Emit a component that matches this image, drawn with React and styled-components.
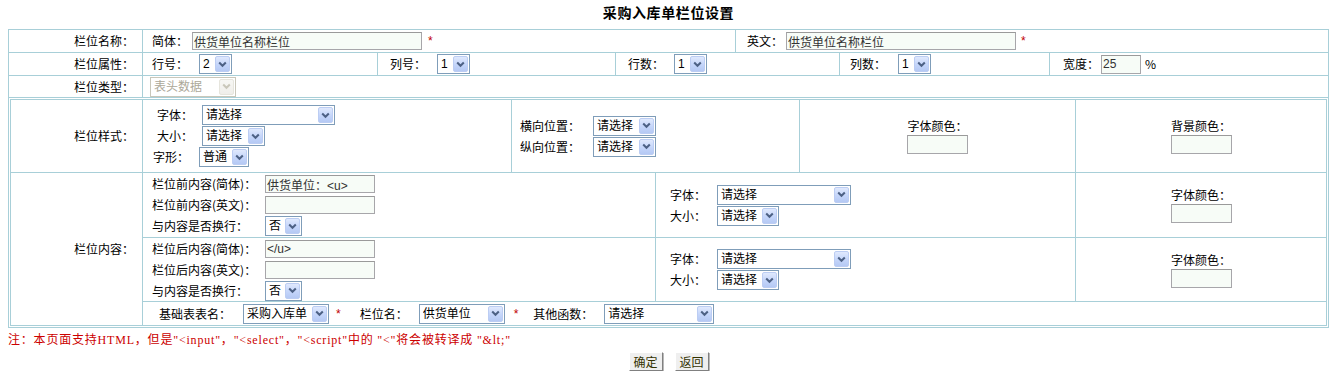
import React from "react";
import styled, { createGlobalStyle } from "styled-components";

const LINE = "#a8cfd8";

const GlobalStyle = createGlobalStyle`
  * { box-sizing: border-box; }
  body {
    margin: 0 8px;
    background: #fff;
    color: #000;
    font-family: "Noto Sans CJK SC", "Liberation Sans", sans-serif;
    font-size: 12px;
    line-height: 16px;
  }
`;

const Title = styled.h1`
  margin: 0;
  height: 29px;
  padding-top: 2px;
  text-align: center;
  font-size: 14px;
  line-height: 20px;
  font-weight: bold;
  letter-spacing: 0.6px;
`;

const Frame = styled.div`
  border: 1px solid ${LINE};
`;

const Row = styled.div`
  display: flex;
  box-sizing: content-box;
  height: ${(p) => p.$h}px;
  & + & {
    border-top: 1px solid ${LINE};
  }
`;

const Label = styled.div`
  flex: none;
  width: ${(p) => p.$w || 133}px;
  display: flex;
  align-items: center;
  justify-content: flex-end;
  padding-right: 8px;
  white-space: nowrap;
`;

const Cell = styled.div`
  display: flex;
  align-items: center;
  flex: ${(p) => (p.$w ? "none" : "1")};
  width: ${(p) => (p.$w ? `${p.$w}px` : "auto")};
  padding-left: ${(p) => p.$pl || 0}px;
  border-left: ${(p) => (p.$noLine ? "none" : `1px solid ${LINE}`)};
  white-space: nowrap;
`;

const Nest = styled.div`
  border-top: 1px solid ${LINE};
  padding: 1px;
`;

const InnerFrame = styled.div`
  border: 1px solid ${LINE};
`;

const Content = styled.div`
  flex: 1;
  display: flex;
  flex-direction: column;
  border-left: 1px solid ${LINE};
`;

const Stack = styled.div`
  display: flex;
  flex-direction: column;
  gap: ${(p) => p.$gap || 0}px;
`;

const Line = styled.div`
  display: flex;
  align-items: center;
  height: ${(p) => p.$h || 20}px;
  padding-left: ${(p) => p.$pl || 0}px;
`;

const ColorStack = styled.div`
  flex: 1;
  display: flex;
  flex-direction: column;
  align-items: center;
  gap: 1px;
`;

const Tag = styled.span`
  flex: none;
  width: ${(p) => (p.$w ? `${p.$w}px` : "auto")};
  margin-left: ${(p) => p.$ml || 0}px;
  white-space: nowrap;
`;

const Star = styled.span`
  flex: none;
  margin-left: ${(p) => p.$ml || 0}px;
  color: #c00000;
  font-family: "Liberation Sans", sans-serif;
  font-size: 12px;
`;

const TextInput = styled.input`
  flex: none;
  width: ${(p) => p.$w}px;
  height: ${(p) => p.$h || 18}px;
  margin: 0 0 0 ${(p) => p.$ml || 0}px;
  padding: 0 1px;
  border: 1px solid #a7a6aa;
  border-top-color: #9a9a9a;
  background: #f7fcf7;
  font-family: "Liberation Sans", "Noto Sans CJK SC", sans-serif;
  font-size: 12px;
  color: #333;
  outline: none;
`;

const SelectWrap = styled.span`
  position: relative;
  flex: none;
  display: inline-block;
  width: ${(p) => p.$w}px;
  height: 20px;
  margin-left: ${(p) => p.$ml || 0}px;
`;

const NativeSelect = styled.select`
  appearance: none;
  width: 100%;
  height: 100%;
  margin: 0;
  padding: 0 18px 0 3px;
  border: 1px solid ${(p) => (p.disabled ? "#c9c7ba" : "#7f9db9")};
  border-radius: 0;
  background: #fff;
  font-family: "Liberation Sans", "Noto Sans CJK SC", sans-serif;
  font-size: 12px;
  color: ${(p) => (p.disabled ? "#aca899" : "#000")};
  opacity: 1;
  outline: none;
`;

const ArrowBox = styled.span`
  position: absolute;
  top: 2px;
  right: 2px;
  width: 15px;
  height: 16px;
  display: flex;
  align-items: center;
  justify-content: center;
  border-radius: 2px;
  pointer-events: none;
  border: 1px solid ${(p) => (p.$disabled ? "#e6e5dd" : "#bccdf3")};
  background: ${(p) =>
    p.$disabled
      ? "linear-gradient(#f7f7f4, #efeeea)"
      : "linear-gradient(#e0e9fd, #c4d5fa 55%, #b5c9f4)"};
`;

const Select = ({ w, value, disabled, ml }) => (
  <SelectWrap $w={w} $ml={ml}>
    <NativeSelect disabled={disabled} defaultValue={value}>
      <option>{value}</option>
    </NativeSelect>
    <ArrowBox $disabled={disabled}>
      <svg width="9" height="7" viewBox="0 0 9 7">
        <path
          d="M1.2 1.5 L4.5 4.8 L7.8 1.5"
          fill="none"
          stroke={disabled ? "#c9c7ba" : "#4d6185"}
          strokeWidth="2"
        />
      </svg>
    </ArrowBox>
  </SelectWrap>
);

const ColorField = ({ title }) => (
  <ColorStack>
    <span>{title}</span>
    <TextInput $w={61} $h={19} />
  </ColorStack>
);

const Note = styled.div`
  margin-top: 4px;
  color: #cc0000;
  font-family: "Liberation Serif", "Noto Sans CJK SC", serif;
  font-size: 12px;
  line-height: 16px;
  letter-spacing: 0.8px;
  white-space: nowrap;
`;

const Buttons = styled.div`
  display: flex;
  justify-content: center;
  gap: 12px;
  margin-top: 4px;
`;

const Button = styled.button`
  width: 34px;
  height: 19px;
  padding: 0;
  border: 1px solid;
  border-color: #fff #808080 #808080 #fff;
  box-shadow: 1px 1px 0 #b8b8b8;
  background: #efefef;
  color: #333300;
  font-family: "Noto Sans CJK SC", sans-serif;
  font-size: 12px;
  line-height: 16px;
`;

const ContentBlock = ({ before }) => (
  <>
    <Cell $w={512} $noLine>
      <Stack>
        <Line $h={21} $pl={9}>
          <Tag $w={113}>栏位{before}内容(简体)：</Tag>
          <TextInput $w={110} defaultValue={before === "前" ? "供货单位：<u>" : "</u>"} />
        </Line>
        <Line $h={21} $pl={9}>
          <Tag $w={113}>栏位{before}内容(英文)：</Tag>
          <TextInput $w={110} />
        </Line>
        <Line $h={21} $pl={9}>
          <Tag $w={113}>与内容是否换行：</Tag>
          <Select w={37} value="否" />
        </Line>
      </Stack>
    </Cell>
    <Cell $w={420} $pl={14}>
      <Stack $gap={1}>
        <Line>
          <Tag $w={47}>字体：</Tag>
          <Select w={134} value="请选择" />
        </Line>
        <Line>
          <Tag $w={47}>大小：</Tag>
          <Select w={62} value="请选择" />
        </Line>
      </Stack>
    </Cell>
    <Cell>
      <ColorField title="字体颜色：" />
    </Cell>
  </>
);

export default function App() {
  return (
    <>
      <GlobalStyle />
      <Title>采购入库单栏位设置</Title>
      <Frame>
        <Row $h={22}>
          <Label>栏位名称：</Label>
          <Cell $w={593} $pl={9}>
            <Tag>简体：</Tag>
            <TextInput $w={230} $ml={4} defaultValue="供货单位名称栏位" />
            <Star $ml={6}>*</Star>
          </Cell>
          <Cell $pl={11}>
            <Tag>英文：</Tag>
            <TextInput $w={230} $ml={3} defaultValue="供货单位名称栏位" />
            <Star $ml={5}>*</Star>
          </Cell>
        </Row>
        <Row $h={22}>
          <Label>栏位属性：</Label>
          <Cell $w={235} $pl={9}>
            <Tag $w={47}>行号：</Tag>
            <Select w={33} value="2" />
          </Cell>
          <Cell $w={238} $pl={12}>
            <Tag $w={47}>列号：</Tag>
            <Select w={33} value="1" />
          </Cell>
          <Cell $w={224} $pl={12}>
            <Tag $w={46}>行数：</Tag>
            <Select w={33} value="1" />
          </Cell>
          <Cell $w={210} $pl={10}>
            <Tag $w={48}>列数：</Tag>
            <Select w={33} value="1" />
          </Cell>
          <Cell $pl={13}>
            <Tag $w={38}>宽度：</Tag>
            <TextInput $w={40} $h={19} defaultValue="25" />
            <Tag $ml={4}>%</Tag>
          </Cell>
        </Row>
        <Row $h={21}>
          <Label>栏位类型：</Label>
          <Cell $pl={7}>
            <Select w={86} value="表头数据" disabled />
          </Cell>
        </Row>
        <Nest>
          <InnerFrame>
            <Row $h={72}>
              <Label $w={131}>栏位样式：</Label>
              <Cell $w={369}>
                <Stack $gap={1}>
                  <Line $pl={14}>
                    <Tag $w={45}>字体：</Tag>
                    <Select w={133} value="请选择" />
                  </Line>
                  <Line $pl={14}>
                    <Tag $w={45}>大小：</Tag>
                    <Select w={63} value="请选择" />
                  </Line>
                  <Line $pl={10}>
                    <Tag $w={46}>字形：</Tag>
                    <Select w={50} value="普通" />
                  </Line>
                </Stack>
              </Cell>
              <Cell $w={288} $pl={8}>
                <Stack $gap={1}>
                  <Line>
                    <Tag $w={73}>横向位置：</Tag>
                    <Select w={63} value="请选择" />
                  </Line>
                  <Line>
                    <Tag $w={73}>纵向位置：</Tag>
                    <Select w={63} value="请选择" />
                  </Line>
                </Stack>
              </Cell>
              <Cell $w={276}>
                <ColorField title="字体颜色：" />
              </Cell>
              <Cell>
                <ColorField title="背景颜色：" />
              </Cell>
            </Row>
            <Row $h={152}>
              <Label $w={131}>栏位内容：</Label>
              <Content>
                <Row $h={64}>
                  <ContentBlock before="前" />
                </Row>
                <Row $h={63}>
                  <ContentBlock before="后" />
                </Row>
                <Row $h={23}>
                  <Cell $noLine $pl={16}>
                    <Tag $w={84}>基础表表名：</Tag>
                    <Select w={86} value="采购入库单" />
                    <Star $ml={7}>*</Star>
                    <Tag $w={59} $ml={19}>栏位名：</Tag>
                    <Select w={86} value="供货单位" />
                    <Star $ml={9}>*</Star>
                    <Tag $w={71} $ml={15}>其他函数：</Tag>
                    <Select w={110} value="请选择" />
                  </Cell>
                </Row>
              </Content>
            </Row>
          </InnerFrame>
        </Nest>
      </Frame>
      <Note>
        注：本页面支持HTML，但是"&lt;input"，"&lt;select"，"&lt;script"中的 "&lt;"将会被转译成 "&amp;lt;"
      </Note>
      <Buttons>
        <Button>确定</Button>
        <Button>返回</Button>
      </Buttons>
    </>
  );
}
